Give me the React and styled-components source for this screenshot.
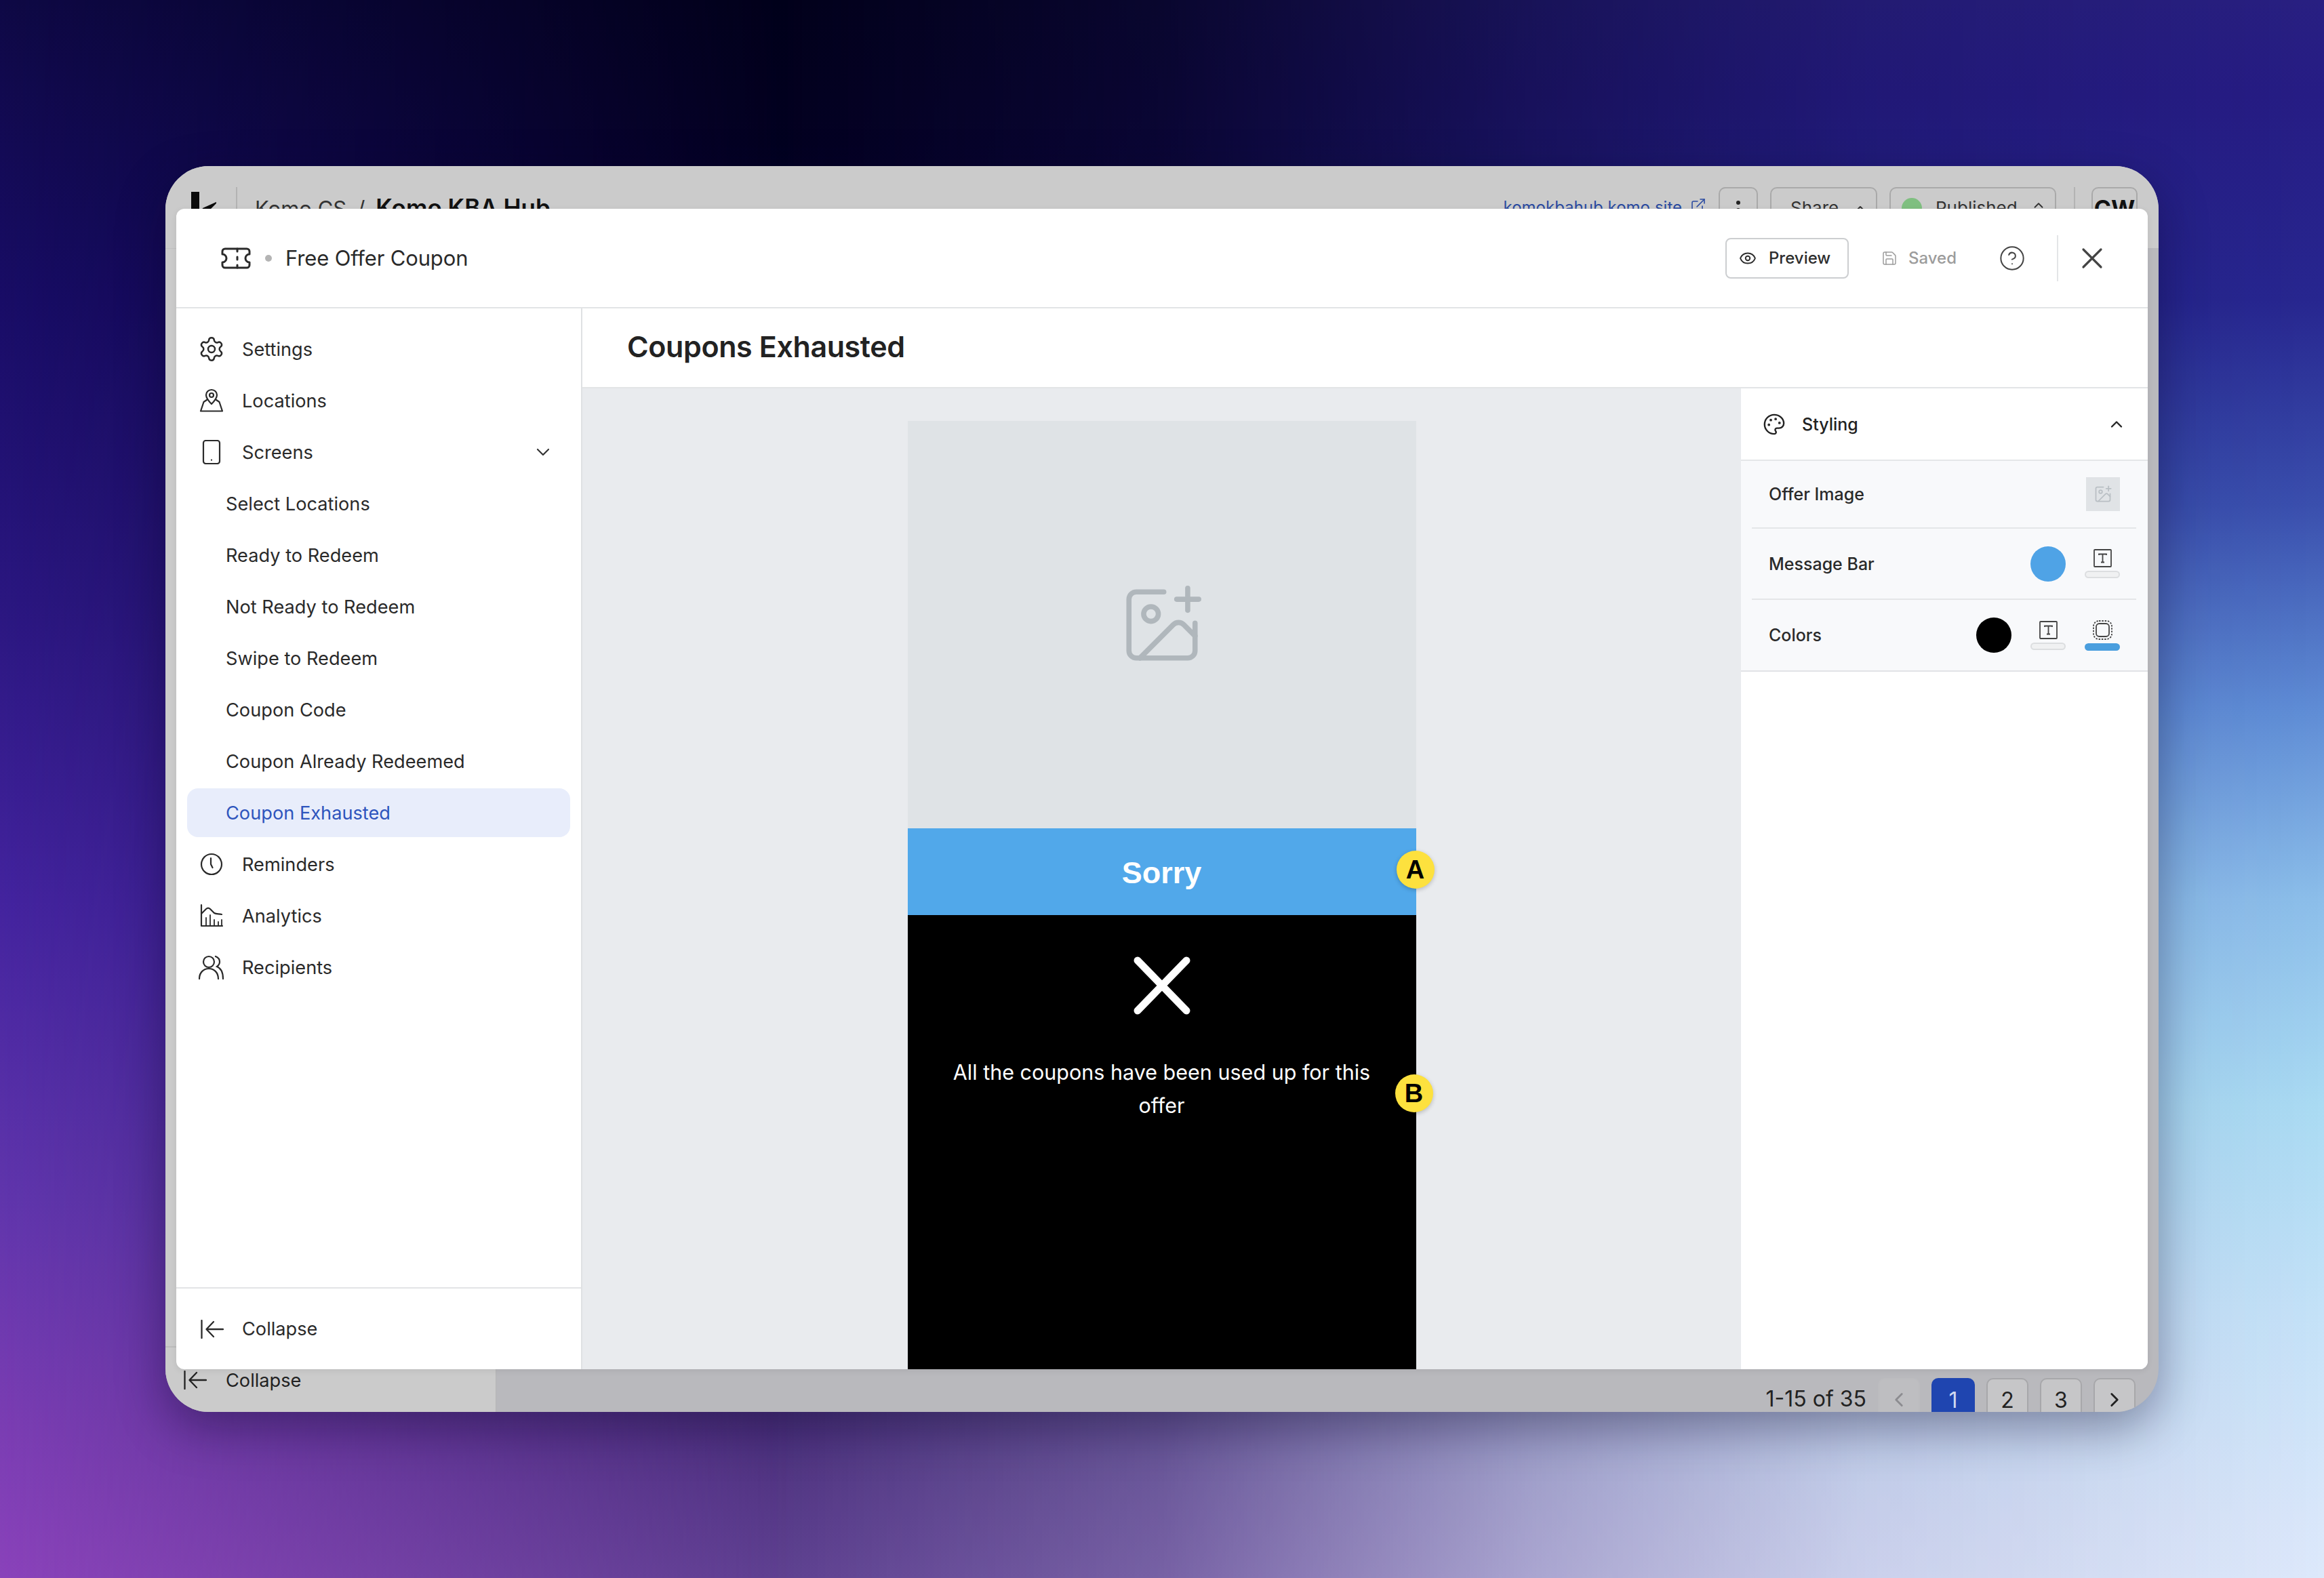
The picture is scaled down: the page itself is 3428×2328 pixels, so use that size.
import React from "react";
import styled, { createGlobalStyle } from "styled-components";
import { Settings, ChevronDown, ChevronUp, ChevronLeft, ChevronRight, Palette, Eye, Save, CircleHelp, ImagePlus, Ticket, ExternalLink } from "lucide-react";

const Global = createGlobalStyle`
  html, body { margin: 0; padding: 0; background: #05021c; }
  * { box-sizing: border-box; }
  body { font-family: Inter, "Noto Sans", sans-serif; color: #222; }
`;

const Page = styled.div`
  position: relative;
  width: 3428px;
  height: 2328px;
  padding: 245px 244px;
  overflow: hidden;
  background: linear-gradient(180deg, #02001a 0%, #040122 12%, #2a1a70 60%, #4a2f7c 90%, #5e4090 100%);
  &::before,
  &::after {
    content: "";
    position: absolute;
    inset: 0;
  }
  &::before {
    background: linear-gradient(180deg, #0e0845 0%, #180c66 19%, #2a1680 38%, #43239e 57%, #6035ac 76%, #783cb2 89%, #8a42ba 100%);
    -webkit-mask-image: linear-gradient(90deg, #000 0%, transparent 34%);
    mask-image: linear-gradient(90deg, #000 0%, transparent 34%);
  }
  &::after {
    background: linear-gradient(180deg, #281f82 0%, #261c85 6%, #272690 19%, #3a4fae 32%, #5f8dd6 45%, #8cbeea 57%, #aadbf3 70%, #c4e2f8 83%, #d9e7fa 96%, #dde9fb 100%);
    -webkit-mask-image: linear-gradient(90deg, transparent 33%, rgba(0,0,0,0.2) 50%, rgba(0,0,0,0.6) 66%, rgba(0,0,0,0.85) 80%, #000 100%);
    mask-image: linear-gradient(90deg, transparent 33%, rgba(0,0,0,0.2) 50%, rgba(0,0,0,0.6) 66%, rgba(0,0,0,0.85) 80%, #000 100%);
  }
`;

const Win = styled.div`
  position: relative;
  z-index: 1;
  width: 2940px;
  height: 1838px;
  border-radius: 64px;
  overflow: hidden;
  display: flex;
  flex-direction: column;
  background: #b9b9bd;
  box-shadow: 0 24px 70px rgba(10, 5, 40, 0.38);
`;

const TopBar = styled.header`
  height: 121px;
  flex: none;
  background: #cbcbcb;
  display: flex;
  align-items: flex-start;
  padding: 31px 31px 0 38px;
`;
const LogoMark = styled.svg`
  width: 38px;
  height: 50px;
  margin-top: 7px;
`;
const BarRule = styled.div`
  width: 2px;
  height: 80px;
  background: #b3b3b3;
  margin: 0 26px 0 28px;
`;
const Crumb = styled.div`
  font-size: 31px;
  line-height: 60px;
  color: #333;
  display: flex;
  align-items: baseline;
  gap: 16px;
  b { font-size: 35px; font-weight: 600; color: #111; }
`;
const RightGroup = styled.div`
  margin-left: auto;
  display: flex;
  align-items: flex-start;
  gap: 18px;
`;
const SiteLink = styled.div`
  font-size: 24px;
  line-height: 60px;
  color: #2a4aa0;
  display: flex;
  gap: 12px;
  svg { margin-top: 15px; }
`;
const BarButton = styled.div`
  height: 64px;
  width: ${(p) => p.$w}px;
  border: 2px solid #a9a9a9;
  border-radius: 10px;
  display: flex;
  gap: 20px;
  font-size: 26px;
  line-height: 58px;
  padding-left: ${(p) => p.$pad}px;
  color: #333;
`;
const Kebab = styled.span`
  width: 6px;
  height: 6px;
  border-radius: 50%;
  background: #222;
  margin-top: 18px;
  box-shadow: 0 11px 0 #222, 0 22px 0 #222;
`;
const GreenDot = styled.span`
  width: 30px;
  height: 30px;
  border-radius: 50%;
  background: #7fbf80;
  margin-top: 14px;
`;
const Avatar = styled.div`
  width: 68px;
  height: 64px;
  border: 2px solid #a9a9a9;
  border-radius: 10px;
  font-weight: 700;
  font-size: 34px;
  line-height: 60px;
  text-align: center;
  color: #111;
`;
const BarRuleRight = styled.div`
  width: 2px;
  height: 80px;
  background: #b3b3b3;
  margin: 0 6px 0 8px;
`;

const BackBody = styled.div`
  flex: 1;
  display: flex;
  min-height: 0;
`;
const BackSide = styled.aside`
  width: 488px;
  background: #cbcbcb;
  border-right: 1px solid #b6b6b6;
  border-top: 1px solid #c0c0c0;
  display: flex;
  flex-direction: column;
  justify-content: flex-end;
`;
const BackCollapse = styled.div`
  height: 97px;
  border-top: 2px solid #bcbcbc;
  display: flex;
  align-items: flex-start;
  gap: 28px;
  padding: 34px 0 0 27px;
  font-size: 27.2px;
  line-height: 30px;
  color: #222;
`;
const BackMain = styled.main`
  flex: 1;
  display: flex;
  justify-content: flex-end;
  align-items: flex-end;
  padding: 0 34px 0 0;
`;
const Pager = styled.div`
  display: flex;
  align-items: flex-start;
  gap: 17px;
  height: 50px;
`;
const PageCount = styled.div`
  font-size: 32px;
  line-height: 62px;
  color: #222;
`;
const PageBtn = styled.div`
  width: ${(p) => (p.$active ? 64 : 62)}px;
  height: 64px;
  border-radius: 10px;
  border: 2px solid ${(p) => (p.$active ? "#1f45b0" : p.$off ? "#bcbcbf" : "#a7a7aa")};
  background: ${(p) => (p.$active ? "#1f45b0" : p.$off ? "#bebec1" : "#c6c6c8")};
  color: ${(p) => (p.$active ? "#cfd8f0" : p.$off ? "#8c8c90" : "#222")};
  font-size: 32px;
  display: flex;
  align-items: flex-start;
  justify-content: center;
  line-height: 62px;
  svg { margin-top: 13px; }
`;

const Modal = styled.div`
  position: absolute;
  top: 63px;
  left: 16px;
  right: 16px;
  bottom: 63px;
  background: #fff;
  border-radius: 12px;
  display: flex;
  flex-direction: column;
  overflow: hidden;
  box-shadow: 0 2px 10px rgba(0, 0, 0, 0.08);
`;
const ModalHead = styled.div`
  height: 147px;
  flex: none;
  border-bottom: 2px solid #e2e4e6;
  display: flex;
  align-items: center;
  padding: 0 66px 0 64px;
  svg { flex: none; }
`;
const HeadDot = styled.span`
  width: 10px;
  height: 10px;
  border-radius: 50%;
  background: #b4b4b4;
  margin: 0 20px 0 19px;
`;
const ModalTitle = styled.div`
  font-size: 31px;
  letter-spacing: -0.15px;
  color: #2a2a2a;
`;
const HeadActions = styled.div`
  margin-left: auto;
  display: flex;
  align-items: center;
`;
const PreviewBtn = styled.button`
  width: 182px;
  height: 60px;
  border: 2px solid #ccced0;
  border-radius: 8px;
  background: #fff;
  display: flex;
  align-items: center;
  gap: 18px;
  padding: 0 0 0 18px;
  font: 450 24px Inter, sans-serif;
  color: #2e2e2e;
`;
const SavedState = styled.div`
  display: flex;
  align-items: center;
  gap: 16px;
  margin-left: 48px;
  font-size: 24px;
  font-weight: 450;
  color: #9c9c9c;
`;
const HelpWrap = styled.div`
  display: flex;
  margin-left: 62px;
  color: #444;
`;
const HeadRule = styled.div`
  width: 2px;
  height: 68px;
  background: #e3e5e7;
  margin: 0 34px 0 46px;
`;
const CloseWrap = styled.div`
  display: flex;
  color: #444;
`;

const ModalBody = styled.div`
  flex: 1;
  display: flex;
  min-height: 0;
`;
const Sidebar = styled.nav`
  width: 599px;
  flex: none;
  border-right: 2px solid #dfe1e3;
  display: flex;
  flex-direction: column;
`;
const NavList = styled.div`
  flex: 1;
  padding: 24px 16px 0;
  display: flex;
  flex-direction: column;
  gap: 4px;
`;
const NavRow = styled.div`
  height: 72px;
  border-radius: 16px;
  display: flex;
  align-items: center;
  padding-left: ${(p) => (p.$sub ? 57 : 18)}px;
  font-size: 27.2px;
  color: ${(p) => (p.$active ? "#2e55bd" : "#2a2a2a")};
  background: ${(p) => (p.$active ? "#e8edfb" : "transparent")};
`;
const NavIcon = styled.span`
  width: 36px;
  height: 36px;
  display: flex;
  align-items: center;
  justify-content: center;
  margin-right: 27px;
  color: #2a2a2a;
  svg { flex: none; }
`;
const NavCaret = styled.span`
  margin-left: auto;
  margin-right: 24px;
  display: flex;
  color: #333;
`;
const SideFoot = styled.div`
  height: 121px;
  border-top: 2px solid #e2e4e6;
  display: flex;
  align-items: center;
  padding: 0 0 0 36px;
  font-size: 27.2px;
  color: #2a2a2a;
  gap: 27px;
`;

const Main = styled.div`
  flex: 1;
  min-width: 0;
  display: flex;
  flex-direction: column;
`;
const MainHead = styled.div`
  height: 118px;
  flex: none;
  border-bottom: 2px solid #e2e4e6;
  display: flex;
  align-items: center;
  padding: 0 0 4px 66px;
  font-size: 43px;
  font-weight: 600;
  letter-spacing: -0.4px;
  color: #222;
`;
const Work = styled.div`
  flex: 1;
  display: flex;
  min-height: 0;
`;
const Canvas = styled.div`
  flex: 1;
  background: #e9ebee;
  padding-top: 48px;
  display: flex;
  justify-content: center;
`;
const Phone = styled.div`
  position: relative;
  width: 750px;
  display: flex;
  flex-direction: column;
`;
const ImageArea = styled.div`
  height: 601px;
  flex: none;
  background: #dfe3e6;
  display: flex;
  align-items: center;
  justify-content: center;
  color: #b0b7bc;
`;
const MessageBar = styled.div`
  height: 128px;
  flex: none;
  background: #51a8ea;
  color: #fff;
  font: 700 45px "Liberation Sans", Arial, sans-serif;
  display: flex;
  align-items: center;
  justify-content: center;
  padding-top: 4px;
`;
const Dark = styled.div`
  flex: 1;
  background: #000;
  color: #fff;
  display: flex;
  flex-direction: column;
  align-items: center;
  padding: 61px 60px 0;
`;
const Message = styled.p`
  margin: 60px 0 0;
  font-size: 30.5px;
  line-height: 49px;
  text-align: center;
`;
const Badge = styled.div`
  position: absolute;
  left: ${(p) => p.$x}px;
  top: ${(p) => p.$y}px;
  width: 56px;
  height: 56px;
  border-radius: 50%;
  background: #fde13e;
  color: #000;
  font: 700 38px "Liberation Sans", Arial, sans-serif;
  display: flex;
  align-items: center;
  justify-content: center;
  box-shadow: 0 2px 6px rgba(0, 0, 0, 0.22);
`;

const Panel = styled.aside`
  width: 600px;
  flex: none;
  background: #fff;
`;
const PanelHead = styled.div`
  height: 107px;
  border-bottom: 2px solid #e4e6e8;
  display: flex;
  align-items: center;
  padding: 0 32px 0 32px;
  font-size: 25px;
  font-weight: 500;
  color: #222;
  gap: 24px;
`;
const PanelCaret = styled.span`
  margin-left: auto;
  display: flex;
`;
const PanelRows = styled.div`
  background: #f8f9fb;
  border-bottom: 2px solid #e1e3e6;
  padding: 0 17px 0 16px;
`;
const Row = styled.div`
  height: ${(p) => p.$h}px;
  display: flex;
  align-items: center;
  padding: 0 24px 0 25px;
  font-size: 25px;
  font-weight: 500;
  color: #2a2a2a;
  border-bottom: ${(p) => (p.$last ? "none" : "2px solid #e4e6e8")};
`;
const RowTools = styled.div`
  margin-left: auto;
  display: flex;
  align-items: center;
  gap: 28px;
`;
const Thumb = styled.div`
  width: 50px;
  height: 50px;
  background: #e0e3e6;
  color: #b9bfc4;
  display: flex;
  align-items: center;
  justify-content: center;
`;
const Swatch = styled.div`
  width: 52px;
  height: 52px;
  border-radius: 50%;
  background: ${(p) => p.$c};
`;
const ToolCol = styled.div`
  width: 52px;
  display: flex;
  flex-direction: column;
  align-items: center;
  gap: 5px;
`;
const ToolBar = styled.div`
  width: 52px;
  height: 11px;
  border-radius: 6px;
  background: ${(p) => (p.$on ? "#4a9ede" : "#f0f1f2")};
  border: 2px solid ${(p) => (p.$on ? "#4a9ede" : "#dcdee0")};
`;

const LocationIcon = () => (
  <svg width="36" height="36" viewBox="0 0 36 36" fill="none" stroke="currentColor" strokeWidth="2.2" strokeLinejoin="round" strokeLinecap="round">
    <path d="M18 2c-4.6 0-8 3.4-8 7.8C10 15 18 23 18 23s8-8 8-13.200C26 5.400 22.600 2 18 2Z" />
    <circle cx="18" cy="10" r="3" />
    <path d="M11 17l-4.500 3L2 33.500h32L29.500 20 25 17" />
  </svg>
);
const PhoneIcon = () => (
  <svg width="36" height="36" viewBox="0 0 36 36" fill="none" stroke="currentColor" strokeWidth="2.200" strokeLinecap="round">
    <rect x="6" y="1" width="24" height="34" rx="3.500" />
    <path d="M18 29.500v.2" />
  </svg>
);
const ClockIcon = () => (
  <svg width="36" height="36" viewBox="0 0 36 36" fill="none" stroke="currentColor" strokeWidth="2.200" strokeLinecap="round" strokeLinejoin="round">
    <circle cx="18" cy="18" r="15" />
    <path d="M17 9v9l2.500 5" />
  </svg>
);
const AnalyticsIcon = () => (
  <svg width="36" height="36" viewBox="0 0 36 36" fill="none" stroke="currentColor" strokeWidth="2.200" strokeLinecap="round" strokeLinejoin="round">
    <path d="M3 2v31h31" />
    <path d="M3 15l7-7c2-2 4-2 6 0l6 6c3 2 6 1 11 2" />
    <path d="M10 33V21M16 33V17M22 33v-9M28 33v-6M33 33v-9" strokeWidth="1.800" />
  </svg>
);
const PeopleIcon = () => (
  <svg width="38" height="36" viewBox="0 0 38 36" fill="none" stroke="currentColor" strokeWidth="2.200" strokeLinecap="round">
    <circle cx="15" cy="10" r="8" />
    <path d="M1 35c0-9 6-15 14-15s14 6 14 15" />
    <path d="M25 2c4 1.500 6 4.500 6 8 0 3-2 5.500-4 7 5 2 9 8 9 18" />
  </svg>
);
const CollapseIcon = () => (
  <svg width="34" height="28" viewBox="0 0 34 28" fill="none" stroke="currentColor" strokeWidth="2.300" strokeLinecap="round" strokeLinejoin="round">
    <path d="M1.500 1v26" />
    <path d="M33 14H9" />
    <path d="M19 3 8.500 14 19 25" />
  </svg>
);
const TextBoxIcon = () => (
  <svg width="27" height="27" viewBox="0 0 27 27" fill="none" stroke="#444" strokeWidth="1.800">
    <rect x="1" y="1" width="25" height="25" rx="1" />
    <path d="M8 9V7.500h11V9M13.500 7.500v12M11 19.500h5" />
  </svg>
);
const FrameIcon = () => (
  <svg width="29" height="29" viewBox="0 0 29 29" fill="none" stroke="#444" strokeWidth="1.800">
    <rect x="1" y="1" width="27" height="27" rx="8" strokeDasharray="2.500 1.800" />
    <rect x="5" y="5" width="19" height="19" rx="4.500" />
  </svg>
);

const navItems = [
  { label: "Settings", icon: <Settings size={40} strokeWidth={1.5} /> },
  { label: "Locations", icon: <LocationIcon /> },
  { label: "Screens", icon: <PhoneIcon />, caret: true },
  { label: "Select Locations", sub: true },
  { label: "Ready to Redeem", sub: true },
  { label: "Not Ready to Redeem", sub: true },
  { label: "Swipe to Redeem", sub: true },
  { label: "Coupon Code", sub: true },
  { label: "Coupon Already Redeemed", sub: true },
  { label: "Coupon Exhausted", sub: true, active: true },
  { label: "Reminders", icon: <ClockIcon /> },
  { label: "Analytics", icon: <AnalyticsIcon /> },
  { label: "Recipients", icon: <PeopleIcon /> },
];

export default function App() {
  return (
    <Page>
      <Global />
      <Win>
        <TopBar>
          <LogoMark viewBox="0 0 38 50">
            <path d="M0 0h12v50H0zM17 24 37 15v2L24 30 38 50H26L14 33z" fill="#0a0a0a" />
          </LogoMark>
          <BarRule />
          <Crumb>
            <span>Komo CS</span>
            <span>/</span>
            <b>Komo KBA Hub</b>
          </Crumb>
          <RightGroup>
            <SiteLink>
              komokbahub.komo.site
              <ExternalLink size={24} strokeWidth={1.6} />
            </SiteLink>
            <BarButton $w={58} $pad={24}>
              <Kebab />
            </BarButton>
            <BarButton $w={158} $pad={28}>
              Share
              <ChevronUp size={24} style={{ marginTop: 18 }} />
            </BarButton>
            <BarButton $w={246} $pad={16}>
              <GreenDot />
              Published
              <ChevronUp size={22} style={{ marginTop: 14 }} />
            </BarButton>
            <BarRuleRight />
            <Avatar>CW</Avatar>
          </RightGroup>
        </TopBar>
        <BackBody>
          <BackSide>
            <BackCollapse>
              <CollapseIcon />
              Collapse
            </BackCollapse>
          </BackSide>
          <BackMain>
            <Pager>
              <PageCount>1-15 of 35</PageCount>
              <PageBtn $off><ChevronLeft size={34} strokeWidth={2} /></PageBtn>
              <PageBtn $active>1</PageBtn>
              <PageBtn>2</PageBtn>
              <PageBtn>3</PageBtn>
              <PageBtn><ChevronRight size={34} strokeWidth={2} /></PageBtn>
            </Pager>
          </BackMain>
        </BackBody>

        <Modal>
          <ModalHead>
            <Ticket size={48} strokeWidth={1.5} color="#2a2a2a" />
            <HeadDot />
            <ModalTitle>Free Offer Coupon</ModalTitle>
            <HeadActions>
              <PreviewBtn>
                <Eye size={26} strokeWidth={1.8} />
                Preview
              </PreviewBtn>
              <SavedState>
                <Save size={24} strokeWidth={1.5} />
                Saved
              </SavedState>
              <HelpWrap>
                <CircleHelp size={40} strokeWidth={1.2} />
              </HelpWrap>
              <HeadRule />
              <CloseWrap>
                <svg width="32" height="32" viewBox="0 0 32 32" fill="none" stroke="currentColor" strokeWidth="3.200" strokeLinecap="round">
                  <path d="M3 3l26 26M29 3 3 29" />
                </svg>
              </CloseWrap>
            </HeadActions>
          </ModalHead>
          <ModalBody>
            <Sidebar>
              <NavList>
                {navItems.map((n) => (
                  <NavRow key={n.label} $sub={n.sub} $active={n.active}>
                    {n.icon && <NavIcon>{n.icon}</NavIcon>}
                    {n.label}
                    {n.caret && (
                      <NavCaret>
                        <ChevronDown size={32} strokeWidth={1.6} />
                      </NavCaret>
                    )}
                  </NavRow>
                ))}
              </NavList>
              <SideFoot>
                <CollapseIcon />
                Collapse
              </SideFoot>
            </Sidebar>
            <Main>
              <MainHead>Coupons Exhausted</MainHead>
              <Work>
                <Canvas>
                  <Phone>
                    <ImageArea>
                      <ImagePlus size={130} strokeWidth={1.4} />
                    </ImageArea>
                    <MessageBar>Sorry</MessageBar>
                    <Dark>
                      <svg width="84" height="86" viewBox="0 0 84 86" fill="none" stroke="#fff" strokeWidth="11" strokeLinecap="round">
                        <path d="M6 6l72 74M78 6 6 80" />
                      </svg>
                      <Message>All the coupons have been used up for this offer</Message>
                    </Dark>
                    <Badge $x={721} $y={634}>A</Badge>
                    <Badge $x={719} $y={964}>B</Badge>
                  </Phone>
                </Canvas>
                <Panel>
                  <PanelHead>
                    <Palette size={34} strokeWidth={1.7} />
                    Styling
                    <PanelCaret>
                      <ChevronUp size={28} strokeWidth={2} />
                    </PanelCaret>
                  </PanelHead>
                  <PanelRows>
                    <Row $h={100}>
                      Offer Image
                      <RowTools>
                        <Thumb><ImagePlus size={28} strokeWidth={1.5} /></Thumb>
                      </RowTools>
                    </Row>
                    <Row $h={105}>
                      Message Bar
                      <RowTools>
                        <Swatch $c="#4fa3e6" />
                        <ToolCol><TextBoxIcon /><ToolBar /></ToolCol>
                      </RowTools>
                    </Row>
                    <Row $h={104} $last>
                      Colors
                      <RowTools>
                        <Swatch $c="#000" />
                        <ToolCol><TextBoxIcon /><ToolBar /></ToolCol>
                        <ToolCol><FrameIcon /><ToolBar $on /></ToolCol>
                      </RowTools>
                    </Row>
                  </PanelRows>
                </Panel>
              </Work>
            </Main>
          </ModalBody>
        </Modal>
      </Win>
    </Page>
  );
}
